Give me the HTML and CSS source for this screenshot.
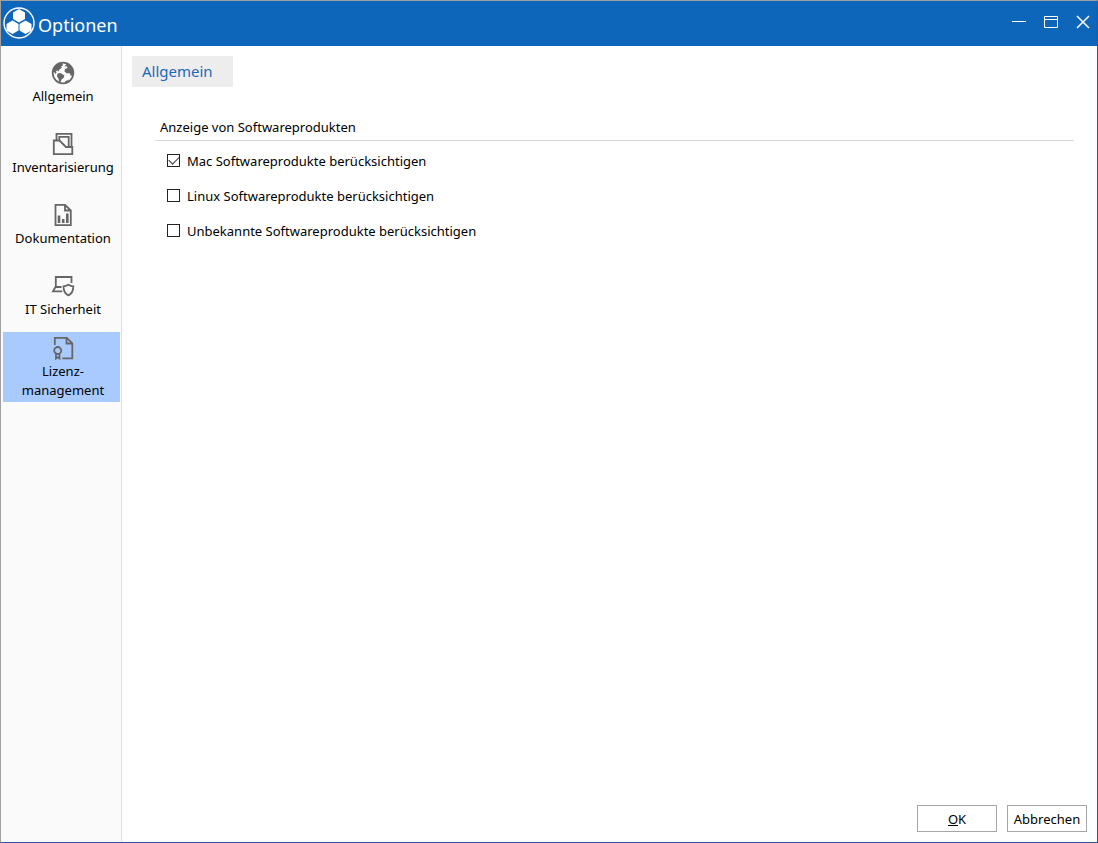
FILE: index.html
```html
<!DOCTYPE html>
<html lang="de">
<head>
<meta charset="utf-8">
<title>Optionen</title>
<link rel="stylesheet" href="styles.css">
</head>
<body>
<div class="window">
  <header class="titlebar">
    <svg class="logo" viewBox="0 0 34 34" aria-hidden="true">
      <circle cx="17" cy="17" r="15" fill="none" stroke="#fff" stroke-width="1.4"/>
      <g fill="#fff">
        <path d="M17 3l6 3.400v6.600L17 16.400l-6-3.400V6.400z"/>
        <path d="M10.500 14.500l6 3.400v6.600l-6 3.400-6-3.400v-6.600z"/>
        <path d="M23.500 14.500l6 3.400v6.600l-6 3.400-6-3.400v-6.600z"/>
      </g>
    </svg>
    <h1 class="title">Optionen</h1>
    <div class="controls">
      <button class="control" aria-label="Minimieren"><svg viewBox="0 0 16 16"><path d="M1 7.500h14"/></svg></button>
      <button class="control" aria-label="Maximieren"><svg viewBox="0 0 16 16"><path d="M1.500 2.500h13v11h-13zM1.500 5.500h13"/></svg></button>
      <button class="control" aria-label="Schließen"><svg viewBox="0 0 16 16"><path class="cross" d="M2 2l12 12M14 2L2 14"/></svg></button>
    </div>
  </header>
  <div class="body">
    <nav class="sidebar">
      <button class="nav-item">
        <svg class="icon" viewBox="0 0 24 24"><circle cx="12" cy="12" r="10.300"/><path class="solid" d="M10 2L4 4.500L1.500 11l1.500 0 1.500 2 1-1.500-.5-1.500 1.500-.5 1 1 .8-2 2.700-1.700-1-1.300 2-1-.5-2zM6.500 12.500l3-.5 4 2.500-1 2.500-2 1.500-1 3-1.500-1-.5-3-1.500-2zM13.500 5l2.500-2.500 3.500 2.500 2.800 6-.8 3-1.500 1-1.500-3-2.500.5-2.500-2 .5-2.500 2.500-1-.5-1.500zM14 20.500l4-2-1 2.500-3 1z"/></svg>
        <span>Allgemein</span>
      </button>
      <button class="nav-item">
        <svg class="icon" viewBox="0 0 24 24"><path d="M5.500 8V1.800h15v13M8.300 8V4.800h9.400v10M2.800 8.500h5.700l6.500 6.500h6.300v7.200H2.800z"/></svg>
        <span>Inventarisierung</span>
      </button>
      <button class="nav-item">
        <svg class="icon" viewBox="0 0 24 24"><path d="M4.500 1.800H14l5.800 5.700v14.700H4.500zM14 2v5.500h5.500"/><path class="bars" d="M8 20v-7.500M12.200 20v-4M16.300 20v-9.500"/></svg>
        <span>Dokumentation</span>
      </button>
      <button class="nav-item">
        <svg class="icon" viewBox="0 0 24 24"><path d="M4.800 13V3h15.700v6M10.500 13H4.500l-2.500 4.300h9.300M12.500 12.300c2 0 3-.5 4.900-1.500 1.800 1 2.800 1.500 4.900 1.500 0 5-1.200 7.500-4.900 9-3.700-1.500-4.900-4-4.900-9z"/></svg>
        <span>IT Sicherheit</span>
      </button>
      <button class="nav-item nav-item-active" aria-current="page">
        <svg class="icon" viewBox="0 0 24 24"><path d="M3.800 9V1.800h12l5.500 5.500v15h-10M15.500 2v5.500h5.500"/><circle cx="6.700" cy="14.500" r="3.500"/><path d="M5 17.500v5l1.700-1.200 1.800 1.200v-5"/></svg>
        <span>Lizenz-<br>management</span>
      </button>
    </nav>
    <main class="content">
      <button class="tab">Allgemein</button>
      <fieldset class="group">
        <legend class="group-title">Anzeige von Softwareprodukten</legend>
        <label class="option"><input class="check" type="checkbox" checked>Mac Softwareprodukte berücksichtigen</label>
        <label class="option"><input class="check" type="checkbox">Linux Softwareprodukte berücksichtigen</label>
        <label class="option"><input class="check" type="checkbox">Unbekannte Softwareprodukte berücksichtigen</label>
      </fieldset>
      <footer class="actions">
        <button class="action"><u>O</u>K</button>
        <button class="action">Abbrechen</button>
      </footer>
    </main>
  </div>
</div>
</body>
</html>
```
FILE: styles.css
```css
* { box-sizing: border-box; }
body {
  margin: 0;
  font: 13px/19px "Segoe UI", "Noto Sans", sans-serif;
  color: #000;
}
button { font: inherit; color: inherit; padding: 0; border: 0; background: none; }
.window {
  display: flex;
  flex-direction: column;
  min-height: 100vh;
  border: 1px solid #2b579a;
  border-top-color: #a0a0a0;
  border-left-color: #a0a0a0;
  background: #fff;
}
.titlebar {
  display: flex;
  align-items: center;
  height: 45px;
  padding: 0 6px 1px 1px;
  background: #0e66ba;
  color: #fff;
}
.logo { width: 34px; height: 34px; }
.title { flex: 1; margin: 3px 0 0 2px; font-size: 18px; font-weight: 400; line-height: 24px; }
.controls { display: flex; gap: 16px; margin-bottom: 2px; }
.control { width: 16px; height: 16px; }
.control svg { display: block; width: 16px; height: 16px; fill: none; stroke: #fff; }
.control .cross { stroke-width: 1.5; }
.body { display: flex; flex: 1; }
.sidebar {
  display: flex;
  flex-direction: column;
  gap: 1px;
  width: 121px;
  padding: 2px 1px 0 2px;
  border-right: 1px solid #e3e3e3;
  background: #fafafa;
}
.nav-item {
  display: flex;
  flex-direction: column;
  align-items: center;
  justify-content: center;
  height: 70px;
  padding: 1px 0 0 3px;
}
.nav-item-active { background: #a9caff; }
.icon { width: 24px; height: 24px; margin-bottom: 2px; fill: none; stroke: #666; stroke-width: 1.8; }
.icon .solid { fill: #666; stroke: none; }
.icon .bars { stroke-width: 2.6; }
.content {
  display: flex;
  flex: 1;
  flex-direction: column;
  align-items: flex-start;
  padding: 10px;
}
.tab { height: 31px; padding: 0 20px 0 10px; background: #ededed; color: #1b69bd; font-size: 15px; }
.group { align-self: stretch; margin: 30px 13px 0 23px; padding: 0; border: 0; min-width: 0; }
.group-title {
  width: 100%;
  height: 24px;
  padding: 1px 5px 0;
  border-bottom: 1px solid #d9d9d9;
}
.option { display: flex; align-items: center; height: 19px; margin: 11px 0 16px 12px; }
.option + .option { margin-top: 0; }
.check {
  appearance: none;
  width: 13px;
  height: 13px;
  margin: 0 7px 2px 0;
  border: 1px solid #222;
  background: #fff;
}
.check:checked::before {
  content: "";
  display: block;
  width: 9px;
  height: 5px;
  margin: 1px 0 0 1px;
  border: solid #333;
  border-width: 0 0 1px 1px;
  transform: rotate(-45deg);
}
.actions { display: flex; align-self: flex-end; gap: 10px; margin-top: auto; }
.action { width: 80px; height: 27px; padding-top: 1px; border: 1px solid #a6a6a6; background: #fff; }
```
